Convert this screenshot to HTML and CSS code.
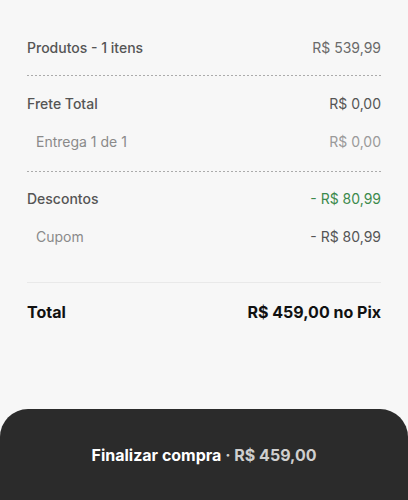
FILE: index.html
```
<!DOCTYPE html>
<html lang="pt-BR">
<head>
<meta charset="utf-8">
<title>Resumo</title>
<link rel="stylesheet" href="styles.css">
</head>
<body>
<div class="page">
  <div class="summary">
    <div class="group group-first">
      <div class="row"><span class="label">Produtos - 1 itens</span><span class="value">R$ 539,99</span></div>
    </div>
    <div class="group group-mid">
      <div class="row"><span class="label">Frete Total</span><span class="value value-dark">R$ 0,00</span></div>
      <div class="row sub"><span class="label">Entrega 1 de 1</span><span class="value value-light">R$ 0,00</span></div>
    </div>
    <div class="group group-last">
      <div class="row"><span class="label">Descontos</span><span class="value value-green">- R$ 80,99</span></div>
      <div class="row sub"><span class="label">Cupom</span><span class="value value-dark">- R$ 80,99</span></div>
    </div>
    <div class="row total"><span>Total</span><span>R$ 459,00 no Pix</span></div>
  </div>
  <div class="footer">
    <span class="cta">Finalizar compra <span class="cta-price">· R$ 459,00</span></span>
  </div>
</div>
</body>
</html>
```
FILE: styles.css
```
* { box-sizing: border-box; }
html, body { margin: 0; padding: 0; }
body {
  background: #f7f7f7;
  font-family: Inter, "Noto Sans", sans-serif;
  font-size: 14px;
}
.page {
  min-height: 100vh;
  display: flex;
  flex-direction: column;
}
.summary {
  padding: 28px 27px 0;
}
.dashed {
  background: linear-gradient(to right, #ababab 50%, transparent 0) left bottom / 4px 1px repeat-x;
}
.group-first {
  padding-bottom: 10px;
  background: linear-gradient(to right, #ababab 50%, transparent 0) left bottom / 4px 1px repeat-x;
}
.group-mid {
  padding: 8px 0 12px;
  background: linear-gradient(to right, #ababab 50%, transparent 0) left bottom / 4px 1px repeat-x;
}
.group-last {
  padding: 7px 0 27px;
  border-bottom: 1px solid #e9e9e9;
}
.row {
  display: flex;
  justify-content: space-between;
  align-items: center;
  height: 38px;
}
.label {
  color: #555;
  font-weight: 500;
}
.value {
  color: #6a6a6a;
}
.value-dark { color: #555; }
.value-light { color: #9a9a9a; }
.value-green { color: #3c8a4c; }
.sub { padding-left: 9px; }
.sub .label {
  color: #8a8a8a;
  font-weight: 400;
}
.total {
  margin-top: 10px;
  font-size: 16px;
  font-weight: 700;
  color: #111;
}
.footer {
  margin-top: auto;
  height: 91px;
  background: #2b2b2b;
  border-radius: 28px 28px 0 0;
  display: flex;
  align-items: center;
  justify-content: center;
}
.cta {
  color: #fff;
  font-size: 16px;
  font-weight: 700;
}
.cta-price { color: #cfcfcf; }
```
